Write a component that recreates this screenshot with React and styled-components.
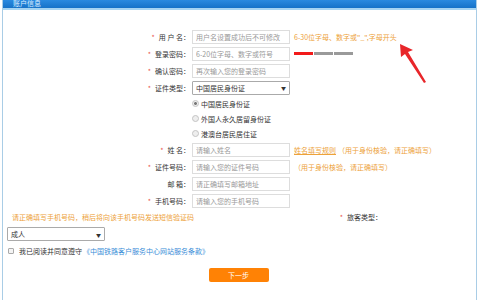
import React from 'react';
import styled, { createGlobalStyle } from 'styled-components';

const GlobalStyle = createGlobalStyle`
  html, body {
    margin: 0;
    padding: 0;
    background: #fff;
  }
  body {
    font-family: "Noto Sans CJK SC", "Noto Sans", sans-serif;
    font-size: 7px;
    color: #333;
  }
`;

const Page = styled.div`
  position: relative;
  width: 480px;
  height: 300px;
  overflow: hidden;
  padding-left: 2px;
  box-sizing: border-box;
`;

const Panel = styled.div`
  width: 475px;
  height: 300px;
  border-left: 1px solid #a9cde6;
  border-right: 1px solid #a9cde6;
  box-sizing: border-box;
`;

const Header = styled.div`
  height: 8px;
  background: linear-gradient(#2a8ae0, #1672c8);
  border-bottom: 2px solid #a6d4f2;
  overflow: hidden;
  color: #d8ecff;
  font-size: 7px;
  line-height: 7px;
  padding-left: 10px;
`;

const Form = styled.div`
  display: grid;
  grid-template-columns: 187px 98px 1fr;
  column-gap: 2px;
  padding-top: 18px;
`;

const Label = styled.div`
  display: flex;
  justify-content: flex-end;
  align-items: center;
  height: 17px;
  gap: 4px;
  white-space: pre;
  color: #333;
  b {
    color: #e9574a;
    font-weight: normal;
  }
`;

const Cell = styled.div`
  display: flex;
  align-items: center;
  height: 17px;
`;

const Input = styled.input`
  width: 98px;
  height: 14px;
  box-sizing: border-box;
  border: 1px solid #ddd;
  padding: 0 3px;
  font-family: inherit;
  font-size: 7px;
  outline: none;
  &::placeholder {
    color: #999;
  }
`;

const SelectBox = styled.div`
  display: flex;
  align-items: center;
  justify-content: space-between;
  width: ${p => p.$w}px;
  height: 14px;
  box-sizing: border-box;
  border: 1px solid #aaa;
  border-radius: 1px;
  padding: 0 3px;
  color: #333;
  i {
    font-style: normal;
    font-size: 5px;
  }
`;

const Hint = styled.div`
  display: flex;
  align-items: center;
  height: 17px;
  padding-left: 2px;
  color: #eda23a;
  white-space: nowrap;
  a {
    color: #eda23a;
    text-decoration: underline;
    margin-right: 2px;
  }
`;

const Strength = styled.div`
  display: flex;
  gap: 1px;
  padding-left: 2px;
  align-items: center;
  height: 17px;
`;

const Seg = styled.span`
  width: 19px;
  height: 3px;
  background: ${p => (p.$on ? '#f21a1a' : '#9a9a9a')};
`;

const RadioRow = styled.div`
  grid-column: 2 / 4;
  display: flex;
  align-items: center;
  gap: 2px;
  height: 15px;
  white-space: nowrap;
`;

const Radio = styled.span`
  width: 5px;
  height: 5px;
  border-radius: 50%;
  border: 1px solid #c4c4c4;
  background: ${p => (p.$checked ? 'radial-gradient(#777 35%, #eee 45%)' : '#eee')};
`;

const Notice = styled.div`
  display: flex;
  align-items: center;
  height: 14px;
  margin-top: 1px;
  padding-left: 9px;
  color: #eda23a;
  span:last-child {
    margin-left: auto;
    margin-right: 94px;
    color: #333;
    b {
      color: #e9574a;
      font-weight: normal;
      margin-right: 4px;
    }
  }
`;

const TypeRow = styled.div`
  padding: 3px 0 0 4px;
`;

const Agree = styled.div`
  display: flex;
  align-items: center;
  gap: 5px;
  height: 14px;
  margin-top: 3px;
  padding-left: 5px;
  a {
    color: #3a8ed8;
    text-decoration: none;
    margin-left: 1px;
  }
`;

const Check = styled.span`
  width: 4px;
  height: 4px;
  border: 1px solid #aaa;
  border-radius: 1px;
  background: #f4f4f4;
`;

const Actions = styled.div`
  display: flex;
  justify-content: center;
  padding-top: 10px;
  padding-right: 2px;
`;

const NextButton = styled.button`
  width: 60px;
  height: 14px;
  border: none;
  border-radius: 2px;
  background: #ff8205;
  color: #fff;
  font-family: inherit;
  font-size: 7px;
  padding: 0;
`;

const Arrow = styled.svg`
  position: absolute;
  left: 395px;
  top: 40px;
`;

const Row = ({ label, star, children, hint }) => (
  <>
    <Label>
      {star && <b>*</b>}
      {label}
    </Label>
    <Cell>{children}</Cell>
    {hint || <div />}
  </>
);

export default function App() {
  return (
    <>
      <GlobalStyle />
      <Page>
        <Panel>
          <Header>账户信息</Header>
          <Form>
            <Row label="用 户 名：" star hint={<Hint>6-30位字母、数字或"_",字母开头</Hint>}>
              <Input placeholder="用户名设置成功后不可修改" />
            </Row>
            <Row
              label="登录密码："
              star
              hint={
                <Strength>
                  <Seg $on />
                  <Seg />
                  <Seg />
                </Strength>
              }
            >
              <Input placeholder="6-20位字母、数字或符号" />
            </Row>
            <Row label="确认密码：" star>
              <Input placeholder="再次输入您的登录密码" />
            </Row>
            <Row label="证件类型：" star>
              <SelectBox $w={98}>
                <span>中国居民身份证</span>
                <i>▼</i>
              </SelectBox>
            </Row>
            <div />
            <RadioRow>
              <Radio $checked />
              中国居民身份证
            </RadioRow>
            <div />
            <RadioRow>
              <Radio />
              外国人永久居留身份证
            </RadioRow>
            <div />
            <RadioRow>
              <Radio />
              港澳台居民居住证
            </RadioRow>
            <Row
              label="姓 名："
              star
              hint={
                <Hint>
                  <a href="#">姓名填写规则</a>（用于身份核验，请正确填写）
                </Hint>
              }
            >
              <Input placeholder="请输入姓名" />
            </Row>
            <Row label="证件号码：" star hint={<Hint>（用于身份核验，请正确填写）</Hint>}>
              <Input placeholder="请输入您的证件号码" />
            </Row>
            <Row label="邮 箱：">
              <Input placeholder="请正确填写邮箱地址" />
            </Row>
            <Row label="手机号码：" star>
              <Input placeholder="请输入您的手机号码" />
            </Row>
          </Form>
          <Notice>
            <span>请正确填写手机号码，稍后将向该手机号码发送短信验证码</span>
            <span>
              <b>*</b>旅客类型：
            </span>
          </Notice>
          <TypeRow>
            <SelectBox $w={98}>
              <span>成人</span>
              <i>▼</i>
            </SelectBox>
          </TypeRow>
          <Agree>
            <Check />
            <span>
              我已阅读并同意遵守
              <a href="#">《中国铁路客户服务中心网站服务条款》</a>
            </span>
          </Agree>
          <Actions>
            <NextButton>下一步</NextButton>
          </Actions>
        </Panel>
        <Arrow width="36" height="46" viewBox="0 0 36 46">
          <polygon points="5,4 18,10 13,12 31,42 29,43 10,14 6,17" fill="#e8262a" />
        </Arrow>
      </Page>
    </>
  );
}
